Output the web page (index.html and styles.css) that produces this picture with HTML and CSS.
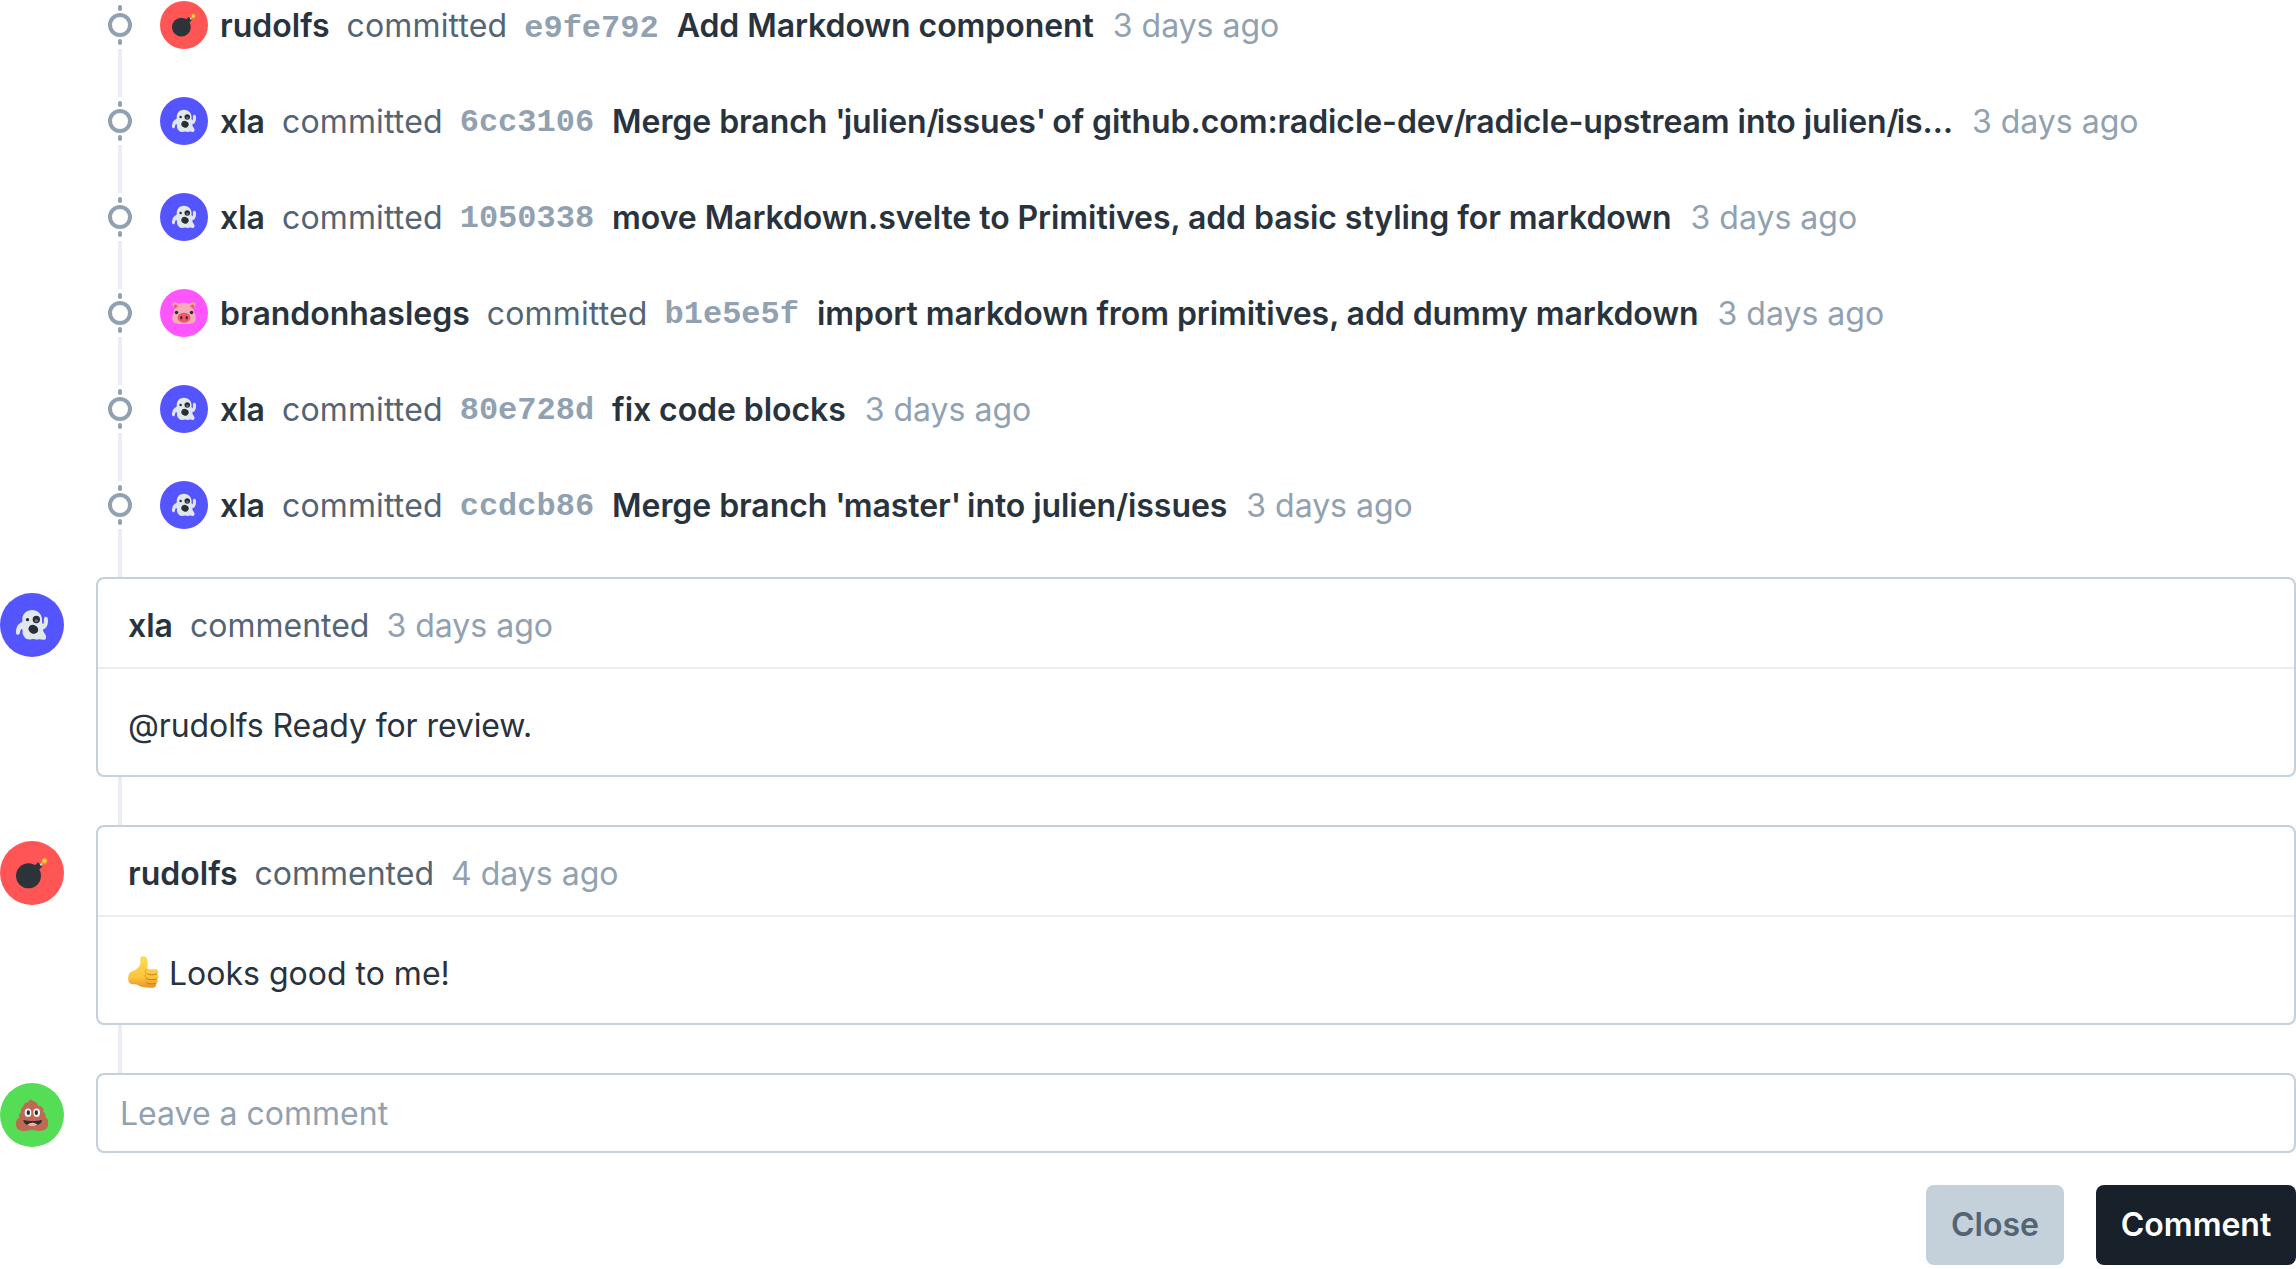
FILE: index.html
```html
<!DOCTYPE html>
<html lang="en">
<head>
<meta charset="utf-8">
<title>Issue discussion</title>
<link rel="stylesheet" href="styles.css">
</head>
<body>
<svg class="sprite" aria-hidden="true">
  <symbol id="ghost" viewBox="0 0 96 96">
    <path fill="#e1e8ed" d="M48 3c17 0 29 12 30 27 0 6 0 11 2 15 3 0 4-3 4-8-1-7 0-13 5-14 6 0 7 5 7 13 0 14-5 22-14 25l-1 3c1 8 9 12 9 18 1 5-1 9-5 10-6 1-12-3-18-1-5 3-10-1-15-1-6 0-9 3-15 1-8-1-9-3-12-8-3-4-6-7-5-14 0-5 0-9-3-9-3 1-4 5-5 9-1 6-3 9-7 8C1 76-1 73 0 66c1-13 8-23 17-26 3-2 2-6 2-11C20 14 32 3 48 3z"/>
    <circle cx="34.500" cy="32" r="5" fill="#292f33"/><circle cx="61" cy="31.500" r="11" fill="#292f33"/><circle cx="61" cy="35" r="4.500" fill="#66757f"/>
    <ellipse cx="52" cy="61" rx="15" ry="13" transform="rotate(25 52 61)" fill="#292f33"/>
  </symbol>
  <symbol id="bomb" viewBox="0 0 96 96">
    <path fill="#2c343a" d="M56 26l10-10 13 12-10 11z"/><circle cx="37.500" cy="56.500" r="37.500" fill="#2c343a"/>
    <path d="M73 25l8-8" stroke="#ccd6dd" stroke-width="6"/>
    <path fill="#f4900c" d="M85 0l3 4 6 0 0 5 2 4-3 4-2 5-6 0-5 2-3-5-3-5 4-4 1-5z"/><circle cx="85" cy="11.500" r="6" fill="#ffd983"/>
  </symbol>
  <symbol id="pig" viewBox="0 0 96 96">
    <path fill="#ea596e" d="M7 27C0 16 2 7 8 5c9-2 22 4 28 14zM89 27C96 16 94 7 88 5c-9-2-22 4-28 14z"/>
    <path fill="#f4abba" d="M48 7c24 0 40 18 40 39 8 8 9 25 5 34-5 11-21 12-45 12S8 91 3 80C-1 71 0 54 8 46 8 25 24 7 48 7zM3 9c5-6 15-4 24 2L10 29C3 20 0 14 3 9zM93 9c-5-6-15-4-24 2l17 18c7-9 10-15 7-20z"/>
    <path fill="#ea596e" d="M10 14c6-1 10 2 14 6L12 31c-4-6-6-13-2-17zM86 14c-6-1-10 2-14 6l12 11c4-6 6-13 2-17z"/>
    <ellipse cx="48" cy="67" rx="26" ry="20" fill="#ea596e"/><ellipse cx="37" cy="67" rx="5" ry="7" fill="#662113"/><ellipse cx="59" cy="67" rx="5" ry="7" fill="#662113"/>
    <circle cx="18" cy="46" r="7" fill="#292f33"/><circle cx="78" cy="46" r="7" fill="#292f33"/>
  </symbol>
  <symbol id="pile" viewBox="0 0 96 96">
    <path fill="#bf6952" d="M42 0c6 7 22 6 24 20 11 0 19 9 16 19 5 3 9 9 6 16 7 4 10 11 8 17 2 17-10 24-24 24-9 0-15-3-24-3s-15 3-24 3C10 96-2 89 0 73c0-9 5-15 10-17-3-7 1-14 5-17-1-9 3-15 8-18C21 8 41 14 42 0z"/>
    <ellipse cx="36" cy="41" rx="10" ry="12.500" fill="#f5f8fa"/><ellipse cx="62" cy="41" rx="10" ry="12.500" fill="#f5f8fa"/>
    <ellipse cx="37" cy="41" rx="5" ry="7" fill="#292f33"/><ellipse cx="61" cy="41" rx="5" ry="7" fill="#292f33"/>
    <path fill="#292f33" d="M24 63c12 4 38 4 51 0 4 0 3 4 1 7-8 13-45 15-52 0-2-4-3-7 0-7z"/>
    <path fill="#f4abba" d="M34 78c8-9 21-9 30-1-7 5-22 6-30 1z"/>
  </symbol>
  <symbol id="thumb" viewBox="0 0 92 96">
    <linearGradient id="skin" x1="0" y1="0" x2="0" y2="1"><stop offset="0" stop-color="#ffda55"/><stop offset=".65" stop-color="#fdc63d"/><stop offset="1" stop-color="#e9942b"/></linearGradient>
    <path fill="url(#skin)" d="M37 4c5-6 17-4 20 5 3 12 1 23 0 31h25c10 1 10 11 4 14 7 4 6 12 0 15 5 5 3 11-3 13 3 6 0 12-7 13-13 1-31 0-40-4-9-5-13-6-22-6-9 0-14-7-14-18s4-19 13-21c10-4 17-10 22-18 4-9 0-18 2-24z"/>
    <path d="M58 54c5 4 18 3 28 0M57 68c7 5 18 4 29 1M57 81c8 4 17 4 26 1" fill="none" stroke="#c9781f" stroke-width="3" stroke-linecap="round"/>
    <path d="M57 40c-6 2-8 8-3 13-5 4-4 10 1 14-4 5-2 10 3 13-2 5-1 9 5 12" fill="none" stroke="#e39a2c" stroke-width="3" stroke-linecap="round"/>
  </symbol>
  <symbol id="node" viewBox="0 0 24 48">
    <circle cx="12" cy="24" r="10" fill="none" stroke="#91a1b1" stroke-width="4"/>
    <rect x="10" y="4" width="4" height="6" rx="2" fill="#91a1b1"/><rect x="10" y="38" width="4" height="6" rx="2" fill="#91a1b1"/>
  </symbol>
</svg>

<main class="thread">
  <article class="commit"><svg class="node"><use href="#node"/></svg><span class="avatar small red"><svg><use href="#bomb"/></svg></span><b class="author">rudolfs</b><span class="verb">committed</span><code class="hash">e9fe792</code><b class="title">Add Markdown component</b><time>3 days ago</time></article>
  <div class="link"></div>
  <article class="commit"><svg class="node"><use href="#node"/></svg><span class="avatar small blue"><svg><use href="#ghost"/></svg></span><b class="author">xla</b><span class="verb">committed</span><code class="hash">6cc3106</code><b class="title">Merge branch <span class="tight">'</span>julien<span class="tight">/</span>issues<span class="tight">'</span> of github.com:radicle-dev<span class="tight">/</span>radicle-upstream into julien<span class="tight">/</span>is…</b><time>3 days ago</time></article>
  <div class="link"></div>
  <article class="commit"><svg class="node"><use href="#node"/></svg><span class="avatar small blue"><svg><use href="#ghost"/></svg></span><b class="author">xla</b><span class="verb">committed</span><code class="hash">1050338</code><b class="title">move Markdown.svelte to Primitives, add basic styling for markdown</b><time>3 days ago</time></article>
  <div class="link"></div>
  <article class="commit"><svg class="node"><use href="#node"/></svg><span class="avatar small pink"><svg><use href="#pig"/></svg></span><b class="author">brandonhaslegs</b><span class="verb">committed</span><code class="hash">b1e5e5f</code><b class="title">import markdown from primitives, add dummy markdown</b><time>3 days ago</time></article>
  <div class="link"></div>
  <article class="commit"><svg class="node"><use href="#node"/></svg><span class="avatar small blue"><svg><use href="#ghost"/></svg></span><b class="author">xla</b><span class="verb">committed</span><code class="hash">80e728d</code><b class="title">fix code blocks</b><time>3 days ago</time></article>
  <div class="link"></div>
  <article class="commit"><svg class="node"><use href="#node"/></svg><span class="avatar small blue"><svg><use href="#ghost"/></svg></span><b class="author">xla</b><span class="verb">committed</span><code class="hash">ccdcb86</code><b class="title">Merge branch <span class="tight">'</span>master<span class="tight">'</span> into julien/issues</b><time>3 days ago</time></article>
  <div class="link"></div>

  <article class="comment">
    <span class="avatar blue"><svg><use href="#ghost"/></svg></span>
    <div class="card">
      <header><b class="author">xla</b><span class="verb">commented</span><time>3 days ago</time></header>
      <p class="mention">@rudolfs Ready for review.</p>
    </div>
  </article>
  <div class="link"></div>
  <article class="comment">
    <span class="avatar red"><svg><use href="#bomb"/></svg></span>
    <div class="card">
      <header><b class="author">rudolfs</b><span class="verb">commented</span><time>4 days ago</time></header>
      <p><svg class="thumb"><use href="#thumb"/></svg>Looks good to me!</p>
    </div>
  </article>
  <div class="link"></div>
  <form class="reply">
    <span class="avatar green"><svg><use href="#pile"/></svg></span>
    <input type="text" placeholder="Leave a comment">
  </form>
  <footer class="actions">
    <button type="button" class="close">Close</button>
    <button type="button" class="submit">Comment</button>
  </footer>
</main>
</body>
</html>
```
FILE: styles.css
```css
* { box-sizing: border-box; }
body {
  margin: 0;
  background: #fff;
  color: #28333d;
  font: 400 32px/48px Inter, sans-serif;
  overflow: hidden;
}
.sprite { position: absolute; width: 0; height: 0; }
.thread { padding-top: 1px; }
.commit {
  display: flex;
  align-items: center;
  height: 48px;
  padding-left: 108px;
  white-space: nowrap;
}
.commit .author, .commit .verb, .commit .title, .commit time { margin-top: 2px; }
.node { width: 24px; height: 48px; margin-right: 28px; flex: none; }
.link { width: 4px; height: 48px; margin-left: 118px; background: #ebedf3; }
.avatar {
  display: flex;
  align-items: center;
  justify-content: center;
  flex: none;
  width: 64px;
  height: 64px;
  border-radius: 50%;
}
.avatar svg { width: 32px; height: 32px; }
.small { width: 48px; height: 48px; margin-right: 12px; }
.small svg { width: 24px; height: 24px; }
.blue { background: #5555ff; }
.red { background: #ff5555; }
.pink { background: #ff55ff; }
.green { background: #55dd55; }
.author, .title { font-weight: 600; }
.verb { margin-left: 17px; color: #546474; letter-spacing: 0.15px; }
.hash {
  margin: 3px 0 0 17px;
  color: #91a1b1;
  font: 700 32px/48px "Liberation Mono", monospace;
}
.commit:first-of-type .hash { margin-top: 7px; }
.title { margin-left: 18px; letter-spacing: -0.07px; }
.tight { letter-spacing: -2px; }
time { margin-left: 19px; color: #91a1b1; }
.comment { display: flex; gap: 32px; }
.comment .avatar { margin-top: 16px; }
.card {
  flex: 1;
  height: 200px;
  border: 2px solid #c5d0da;
  border-radius: 8px;
}
.card header {
  display: flex;
  align-items: center;
  height: 90px;
  padding: 5px 0 0 30px;
  border-bottom: 2px solid #ebedf3;
}
.card .verb { letter-spacing: 0; }
.card time { margin-left: 17px; }
.card p { display: flex; align-items: center; margin: 0; padding: 33px 30px; }
.card .mention { letter-spacing: -0.1px; }
.thumb { width: 31px; height: 32px; margin: -4px 10px 0 0; }
.reply { display: flex; align-items: center; gap: 32px; }
.reply .avatar { margin-top: 4px; }
.reply input {
  flex: 1;
  height: 80px;
  padding: 0 22px;
  border: 2px solid #c5d0da;
  border-radius: 8px;
  font: inherit;
}
.reply input::placeholder { color: #91a1b1; opacity: 1; }
.actions { display: flex; justify-content: flex-end; gap: 32px; margin-top: 32px; }
.actions button {
  height: 80px;
  padding: 0;
  border: 0;
  border-radius: 8px;
  font: 600 32px/48px Inter, sans-serif;
}
.close { width: 138px; background: #c5d1da; color: #546474; }
.submit { width: 200px; background: #18212a; color: #fff; }
```
